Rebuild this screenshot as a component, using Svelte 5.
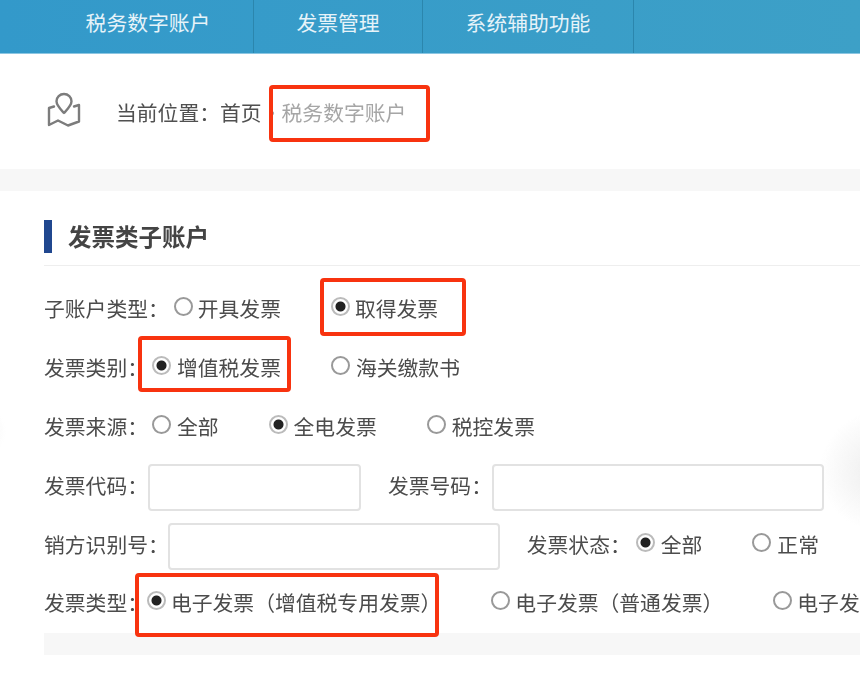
<script lang="ts">
  const nav = ['税务数字账户', '发票管理', '系统辅助功能'];

  const subType = [
    { text: '开具发票', checked: false },
    { text: '取得发票', checked: true }
  ];
  const category = [
    { text: '增值税发票', checked: true },
    { text: '海关缴款书', checked: false }
  ];
  const source = [
    { text: '全部', checked: false },
    { text: '全电发票', checked: true },
    { text: '税控发票', checked: false }
  ];
  const status = [
    { text: '全部', checked: true },
    { text: '正常', checked: false }
  ];
  const kinds = [
    { text: '电子发票（增值税专用发票）', checked: true },
    { text: '电子发票（普通发票）', checked: false },
    { text: '电子发票（机动车销售统一发票）', checked: false }
  ];
</script>

<div class="page">
  <nav class="topbar">
    {#each nav as item}
      <a class="nav-item" href="#top">{item}</a>
    {/each}
  </nav>

  <div class="crumbs">
    <svg class="map-icon" viewBox="0 0 36 36" width="36" height="36" fill="none" stroke="#7c7c7c" stroke-width="2.400" stroke-linejoin="round" stroke-linecap="round">
      <path d="M18 2c-4.200 0-7.500 3.200-7.500 7.300 0 4.200 4 8 7.500 11.700 3.500-3.700 7.500-7.500 7.500-11.700C25.500 5.200 22.200 2 18 2z" />
      <path d="M8 14.500L3 16v17l9-4.500 10 5 11-4V13l-5 1.500" />
    </svg>
    <span class="crumb-label">当前位置：</span>
    <span class="crumb-home">首页</span>
    <span class="crumb-dot">·</span>
    <span class="crumb-current">税务数字账户</span>
  </div>

  <div class="strip"></div>

  <section class="panel">
    <h2 class="panel-title">发票类子账户</h2>

    <div class="row">
      <span class="label">子账户类型：</span>
      <div class="options opts-type">
        {#each subType as o}
          <label class="opt"><input type="radio" name="subType" checked={o.checked} />{o.text}</label>
        {/each}
      </div>
    </div>

    <div class="row">
      <span class="label">发票类别：</span>
      <div class="options opts-cat">
        {#each category as o}
          <label class="opt"><input type="radio" name="category" checked={o.checked} />{o.text}</label>
        {/each}
      </div>
    </div>

    <div class="row">
      <span class="label">发票来源：</span>
      <div class="options opts-src">
        {#each source as o}
          <label class="opt"><input type="radio" name="source" checked={o.checked} />{o.text}</label>
        {/each}
      </div>
    </div>

    <div class="row">
      <span class="label">发票代码：</span>
      <input class="field code" type="text" />
      <span class="label second">发票号码：</span>
      <input class="field number" type="text" />
    </div>

    <div class="row">
      <span class="label">销方识别号：</span>
      <input class="field seller" type="text" />
      <span class="label third">发票状态：</span>
      <div class="options opts-status">
        {#each status as o}
          <label class="opt"><input type="radio" name="status" checked={o.checked} />{o.text}</label>
        {/each}
      </div>
    </div>

    <div class="row last">
      <span class="label">发票类型：</span>
      <div class="options opts-kind">
        {#each kinds as o}
          <label class="opt"><input type="radio" name="kind" checked={o.checked} />{o.text}</label>
        {/each}
      </div>
    </div>

    <div class="foot"></div>
  </section>

  <!-- red annotation frames drawn on top of the screenshot -->
  <div class="mark m1"></div>
  <div class="mark m2"></div>
  <div class="mark m3"></div>
  <div class="mark m4"></div>
</div>

<style>
  :global(body) {
    margin: 0;
    background: #fff;
    overflow: hidden;
  }
  .page {
    position: relative;
    width: 860px;
    height: 675px;
    overflow: hidden;
    font-family: "Noto Sans CJK SC", "Liberation Sans", sans-serif;
    font-size: 20.800px;
    color: #4c4c4c;
    filter: blur(0.7px);
  }
  .topbar {
    display: flex;
    height: 54px;
    padding-left: 43px;
    box-sizing: border-box;
    background: linear-gradient(90deg, #3399ca, #3da0c7);
    border-bottom: 1px solid #8cc6e2;
  }
  .nav-item {
    display: flex;
    align-items: center;
    justify-content: center;
    box-sizing: border-box;
    height: 53px;
    padding-bottom: 10px;
    border-right: 1px solid #2b86ad;
    color: #e6f3f9;
    text-decoration: none;
  }
  .nav-item:nth-child(1) { width: 211px; }
  .nav-item:nth-child(2) { width: 169px; }
  .nav-item:nth-child(3) { width: 211px; }

  .crumbs {
    display: flex;
    align-items: center;
    height: 115px;
    padding-left: 46px;
    box-sizing: border-box;
  }
  .map-icon {
    margin-right: 34px;
    margin-top: -4px;
  }
  .crumb-label,
  .crumb-home {
    color: #505050;
  }
  .crumb-dot {
    width: 20px;
    text-align: center;
    color: #aaa;
  }
  .crumb-current {
    color: #a6a6a6;
  }
  .strip {
    height: 22px;
    background: #f7f7f7;
  }

  .panel {
    height: 484px;
    padding-left: 44px;
    background:
      radial-gradient(circle 60px at 880px 280px, #ececec, rgba(255, 255, 255, 0)),
      radial-gradient(circle 26px at -20px 240px, #f3f3f3, rgba(255, 255, 255, 0));
  }
  .panel-title {
    display: flex;
    align-items: center;
    height: 75px;
    margin: 0 0 12px;
    padding-top: 16px;
    border-bottom: 1px solid #eeeeee;
    font-size: 23.500px;
    font-weight: 700;
    color: #444;
    box-sizing: border-box;
  }
  .panel-title::before {
    content: "";
    width: 8px;
    height: 33px;
    margin-right: 16px;
    background: #20478f;
  }
  .row {
    display: flex;
    align-items: center;
    height: 59px;
    white-space: nowrap;
  }
  .row.last {
    height: 58px;
    margin-bottom: 2px;
  }
  .options {
    display: flex;
    align-items: center;
  }
  .opt {
    display: inline-flex;
    align-items: center;
    flex: none;
  }
  .opt input {
    appearance: none;
    flex: none;
    width: 19px;
    height: 19px;
    margin: -3px 6px 0 0;
    background: #fff;
    border: 2px solid #999;
    border-radius: 50%;
    box-sizing: border-box;
  }
  .opt input:checked {
    background: radial-gradient(circle, #222 0, #222 4.500px, #fff 5.500px);
    border: 2.500px solid #bbb;
  }
  .opts-type { margin-left: 5px; gap: 50px; }
  .opts-type .opt input { margin-right: 5px; }
  .opts-cat { margin-left: 4px; gap: 50px; }
  .opts-src { margin-left: 4px; gap: 50px; }
  .opts-status { margin-left: 5px; gap: 50px; }
  .opts-kind { margin-left: -1px; gap: 50px; }
  .opts-kind .opt input { margin-right: 5px; }

  .field {
    height: 47px;
    margin-top: 6px;
    background: #fff;
    border: 2px solid #e2e2e2;
    border-radius: 4px;
    box-sizing: border-box;
  }
  .code { width: 213px; margin-left: 0; }
  .number { width: 332px; margin-left: 0; }
  .seller { width: 332px; margin-left: -1px; }
  .second { margin-left: 27px; }
  .third { margin-left: 27px; }

  .foot {
    height: 22px;
    background: #f7f7f7;
  }

  .mark {
    position: absolute;
    border: 4.500px solid #f8330f;
    border-radius: 4px;
    box-sizing: border-box;
  }
  .m1 { left: 269px; top: 85px; width: 161px; height: 57px; }
  .m2 { left: 320px; top: 278px; width: 146px; height: 58px; }
  .m3 { left: 138px; top: 336px; width: 153px; height: 56px; }
  .m4 { left: 135px; top: 573px; width: 304px; height: 64px; }
</style>
